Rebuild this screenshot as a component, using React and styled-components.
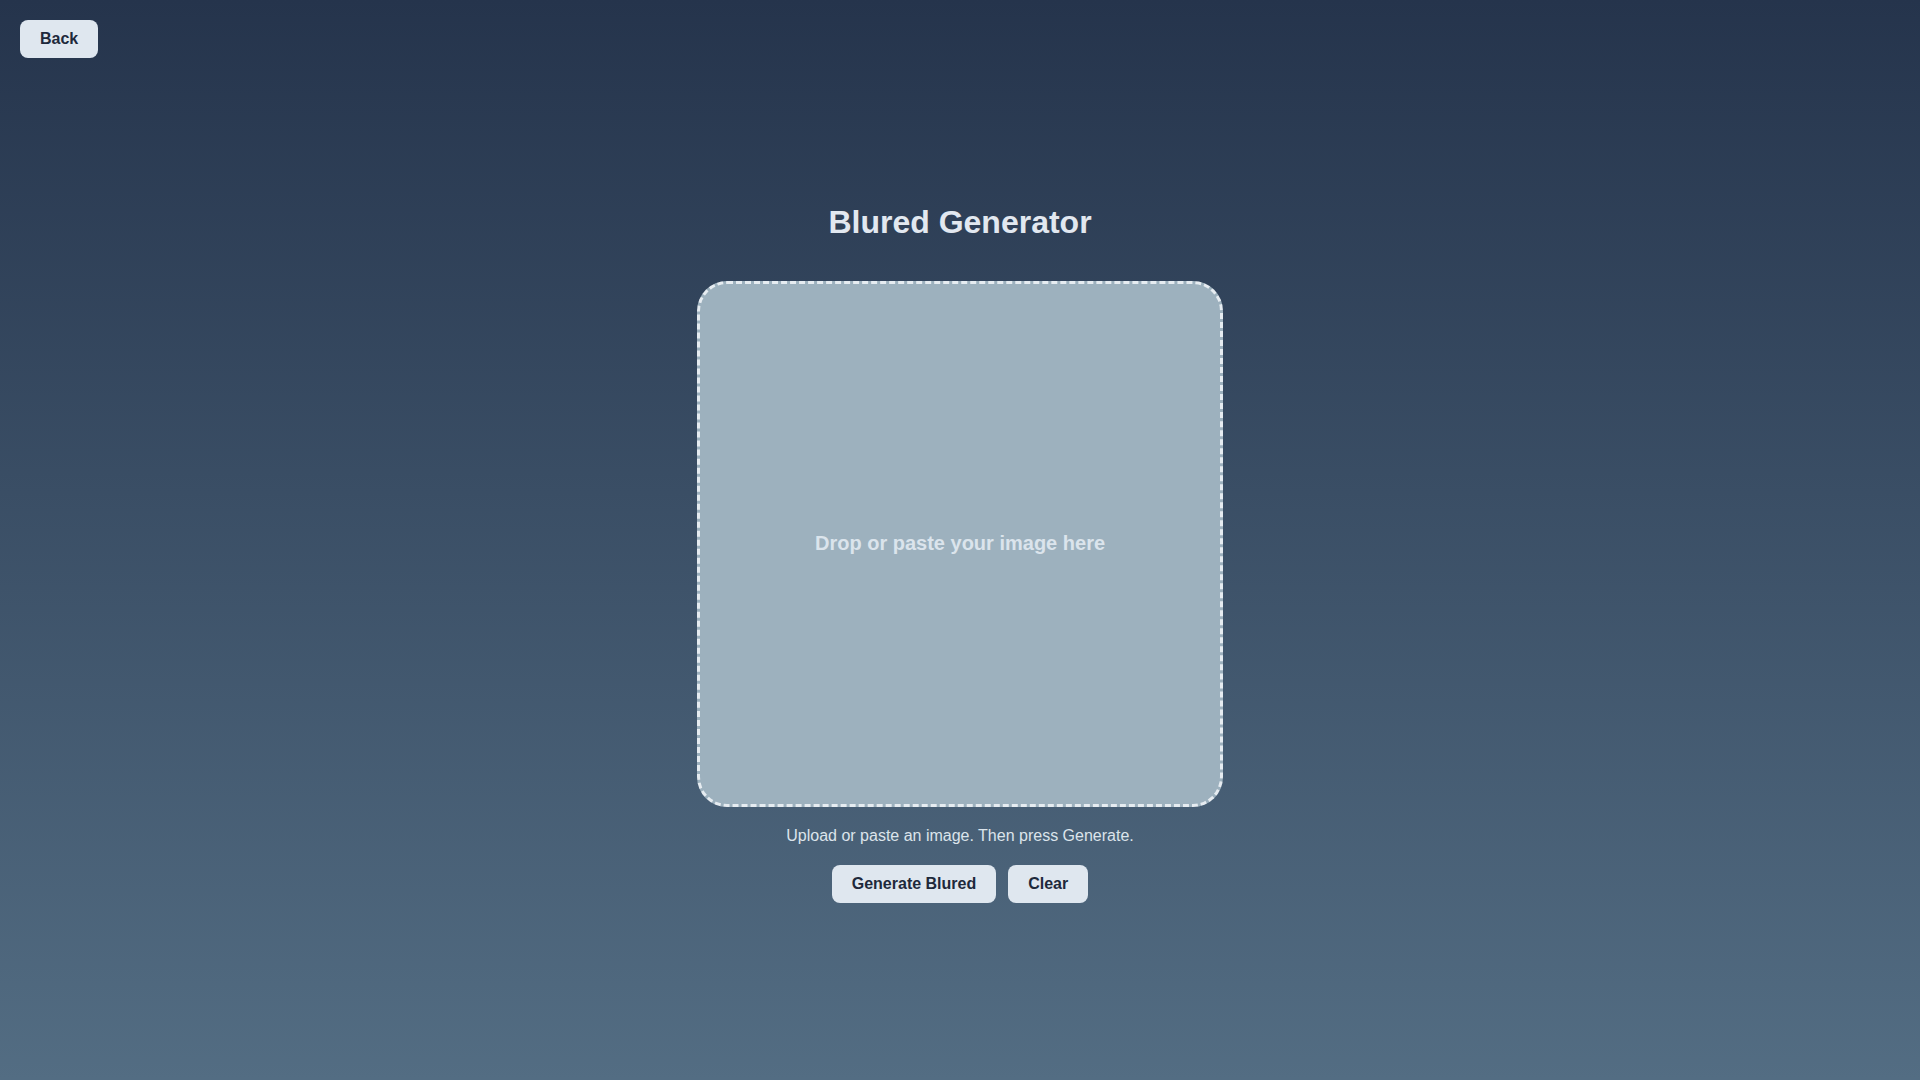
import styled, { createGlobalStyle } from 'styled-components';

const GlobalStyle = createGlobalStyle`
  * {
    box-sizing: border-box;
  }
  body {
    margin: 0;
    font-family: 'Liberation Sans', Arial, sans-serif;
    background: linear-gradient(to bottom, #25344c 0%, #536d83 100%);
    min-height: 100vh;
  }
`;

const App = () => {
  return (
    <>
      <GlobalStyle />
      <Page>
        <TopBar>
          <Button>Back</Button>
        </TopBar>
        <Main>
          <Title>Blured Generator</Title>
          <DropZone>
            <DropText>Drop or paste your image here</DropText>
          </DropZone>
          <Hint>Upload or paste an image. Then press Generate.</Hint>
          <Actions>
            <Button>Generate Blured</Button>
            <Button>Clear</Button>
          </Actions>
        </Main>
      </Page>
    </>
  );
};

export default App;

const Page = styled.div`
  min-height: 100vh;
  padding: 20px;
`;

const TopBar = styled.div`
  display: flex;
`;

const Button = styled.button`
  font-family: 'Liberation Sans', Arial, sans-serif;
  font-size: 16px;
  font-weight: 700;
  line-height: normal;
  color: #1e293b;
  background-color: #dfe7ef;
  border: none;
  border-radius: 8px;
  padding: 10px 20px;
  cursor: pointer;
`;

const Main = styled.main`
  display: flex;
  flex-direction: column;
  align-items: center;
  margin-top: 146px;
`;

const Title = styled.h1`
  margin: 0 0 40px;
  font-size: 32px;
  font-weight: 700;
  line-height: normal;
  color: #e2e8f0;
`;

const DropZone = styled.div`
  width: 526px;
  height: 526px;
  display: flex;
  align-items: center;
  justify-content: center;
  background-color: #9db1be;
  border: 3px dashed #e6ecf1;
  border-radius: 30px;
`;

const DropText = styled.div`
  font-size: 20px;
  font-weight: 700;
  color: #dbe4ec;
  margin-bottom: 2px;
`;

const Hint = styled.p`
  margin: 20px 0 20px;
  font-size: 16px;
  line-height: normal;
  color: #dce4eb;
`;

const Actions = styled.div`
  display: flex;
  gap: 12px;
`;
